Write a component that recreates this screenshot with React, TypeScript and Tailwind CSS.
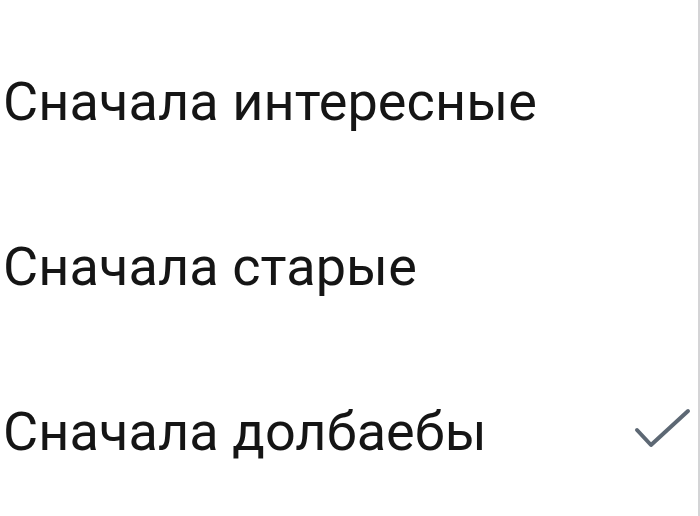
import { useState } from 'react'

const options = ['Сначала интересные', 'Сначала старые', 'Сначала долбаебы']

function Check() {
  return (
    <svg width="60" height="46" viewBox="0 0 60 46" fill="none" className="shrink-0 mb-[7px]">
      <path
        d="M4 25 L18 40 L55 6"
        stroke="#5d6874"
        strokeWidth="4"
        strokeLinecap="round"
        strokeLinejoin="round"
      />
    </svg>
  )
}

export default function App() {
  const [selected, setSelected] = useState(2)

  return (
    <div className="w-[700px] h-[516px] bg-white overflow-hidden border-r-2 border-[#d4d4d6] font-['Roboto',sans-serif]">
      <div className="flex flex-col pt-[19px]">
        {options.map((label, i) => (
          <button
            key={label}
            onClick={() => setSelected(i)}
            className="flex items-center justify-between h-[165px] pl-[3px] pr-[5px] text-left"
          >
            <span className="text-[54px] leading-none text-[#151515] tracking-[0.1px]">{label}</span>
            {selected === i && <Check />}
          </button>
        ))}
      </div>
    </div>
  )
}
